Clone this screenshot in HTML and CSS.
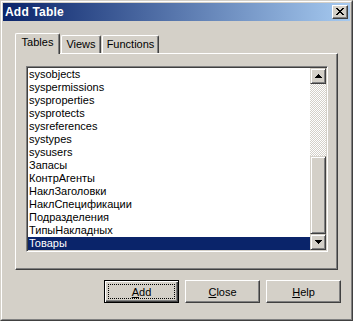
FILE: index.html
```
<!DOCTYPE html>
<html lang="ru">
<head>
    <meta charset="utf-8">
    <title>Add Table</title>
    <link rel="stylesheet" href="styles.css">
</head>
<body>
    <div class="window">
        <div class="frame">
            <div class="titlebar">
                <span class="title">Add Table</span>
                <button class="close-btn">
                    <svg width="8" height="7" viewBox="0 0 8 7">
                        <path d="M0 0h2v1h1v1h2V1h1V0h2v1H7v1H6v1H5v1h1v1h1v1h1v1H6V6H5V5H3v1H2v1H0V6h1V5h1V4h1V3H2V2H1V1H0z" fill="#000"/>
                    </svg>
                </button>
            </div>

            <div class="content">
                <div class="tabs">
                    <div class="tab active" style="width: 45px">Tables</div>
                    <div class="tab" style="width: 40px">Views</div>
                    <div class="tab" style="width: 57px">Functions</div>
                </div>

                <div class="panel">
                    <div class="listbox">
                        <ul class="items">
                            <li>sysobjects</li>
                            <li>syspermissions</li>
                            <li>sysproperties</li>
                            <li>sysprotects</li>
                            <li>sysreferences</li>
                            <li>systypes</li>
                            <li>sysusers</li>
                            <li>Запасы</li>
                            <li>КонтрАгенты</li>
                            <li>НаклЗаголовки</li>
                            <li>НаклСпецификации</li>
                            <li>Подразделения</li>
                            <li>ТипыНакладных</li>
                            <li class="selected">Товары</li>
                        </ul>
                        <div class="scrollbar">
                            <div class="sb-btn">
                                <svg width="7" height="4" viewBox="0 0 7 4"><path d="M3 0h1v1h1v1h1v1h1v1H0V3h1V2h1V1h1z" fill="#000"/></svg>
                            </div>
                            <div class="sb-track"></div>
                            <div class="sb-thumb"></div>
                            <div class="sb-btn">
                                <svg width="7" height="4" viewBox="0 0 7 4"><path d="M0 0h7v1H6v1H5v1H4v1H3V3H2V2H1V1H0z" fill="#000"/></svg>
                            </div>
                        </div>
                    </div>
                </div>

                <div class="button-row">
                    <button class="btn btn-default"><span class="focus"><u>A</u>dd</span></button>
                    <button class="btn"><u>C</u>lose</button>
                    <button class="btn"><u>H</u>elp</button>
                </div>
            </div>
        </div>
    </div>
</body>
</html>
```

FILE: styles.css
```
* {
    margin: 0;
    padding: 0;
    box-sizing: border-box;
}

body {
    font-family: "Liberation Sans", Arial, sans-serif;
    font-size: 11px;
    background: #d4d0c8;
    color: #000;
}

.window {
    width: 353px;
    height: 321px;
    border: 1px solid;
    border-color: #d4d0c8 #404040 #404040 #d4d0c8;
    background: #d4d0c8;
}

.frame {
    height: 100%;
    border: 1px solid;
    border-color: #fff #808080 #808080 #fff;
    padding: 1px;
}

.titlebar {
    height: 18px;
    display: flex;
    align-items: center;
    justify-content: space-between;
    padding: 0 2px;
    background: linear-gradient(to right, #0a246a, #a6caf0);
}

.title {
    color: #fff;
    font-weight: bold;
    font-size: 12px;
    letter-spacing: 0.2px;
}

.close-btn {
    width: 16px;
    height: 14px;
    display: flex;
    align-items: center;
    justify-content: center;
    background: #d4d0c8;
    border: 1px solid;
    border-color: #fff #404040 #404040 #fff;
    box-shadow: inset -1px -1px #808080;
    padding-bottom: 1px;
}

.content {
    padding: 12px 12px 0 12px;
}

.tabs {
    display: flex;
    align-items: flex-end;
    height: 20px;
}

.tab {
    height: 18px;
    text-align: center;
    line-height: 16px;
    border-top: 1px solid #fff;
    border-left: 1px solid #fff;
    border-right: 1px solid #404040;
    box-shadow: inset -1px 0 #808080;
    border-radius: 2px 2px 0 0;
    background: #d4d0c8;
}

.tab + .tab {
    margin-left: 1px;
}

.tab.active {
    height: 21px;
    line-height: 17px;
    margin-bottom: -1px;
    position: relative;
    z-index: 1;
}

.panel {
    height: 217px;
    border: 1px solid;
    border-color: #fff #404040 #404040 #fff;
    box-shadow: inset -1px -1px #808080;
    padding: 12px 0 0 10px;
}

.listbox {
    width: 302px;
    height: 186px;
    display: flex;
    border: 1px solid;
    border-color: #808080 #fff #fff #808080;
    box-shadow: inset 1px 1px #404040, inset -1px -1px #d4d0c8;
    padding: 1px;
    background: #fff;
}

.items {
    flex: 1;
    list-style: none;
}

.items li {
    height: 13px;
    line-height: 13px;
    padding-left: 1px;
    white-space: nowrap;
}

.items li.selected {
    background: #0a246a;
    color: #fff;
}

.scrollbar {
    width: 16px;
    display: flex;
    flex-direction: column;
}

.sb-btn,
.sb-thumb {
    background: #d4d0c8;
    border: 1px solid;
    border-color: #d4d0c8 #404040 #404040 #d4d0c8;
    box-shadow: inset 1px 1px #fff, inset -1px -1px #808080;
}

.sb-btn {
    height: 16px;
    display: flex;
    align-items: center;
    justify-content: center;
}

.sb-btn svg {
    display: block;
}

.sb-track {
    height: 72px;
    background: repeating-conic-gradient(#d4d0c8 0 25%, #fff 0 50%) 0 0 / 2px 2px;
}

.sb-thumb {
    height: 78px;
}

.button-row {
    display: flex;
    justify-content: flex-end;
    gap: 6px;
    margin-top: 10px;
    padding-right: 9px;
    margin-right: -12px;
}

.btn {
    width: 75px;
    height: 23px;
    font-family: inherit;
    font-size: 11px;
    font-weight: normal;
    color: #000;
    background: #d4d0c8;
    border: 1px solid;
    border-color: #fff #404040 #404040 #fff;
    box-shadow: inset -1px -1px #808080;
    display: flex;
    align-items: center;
    justify-content: center;
}

.btn-default {
    border: 1px solid #000;
    box-shadow: inset 1px 1px #fff, inset -1px -1px #404040, inset -2px -2px #808080;
    padding: 3px;
}

.focus {
    flex: 1;
    height: 100%;
    border: 1px dotted #000;
    display: flex;
    align-items: center;
    justify-content: center;
}
```
